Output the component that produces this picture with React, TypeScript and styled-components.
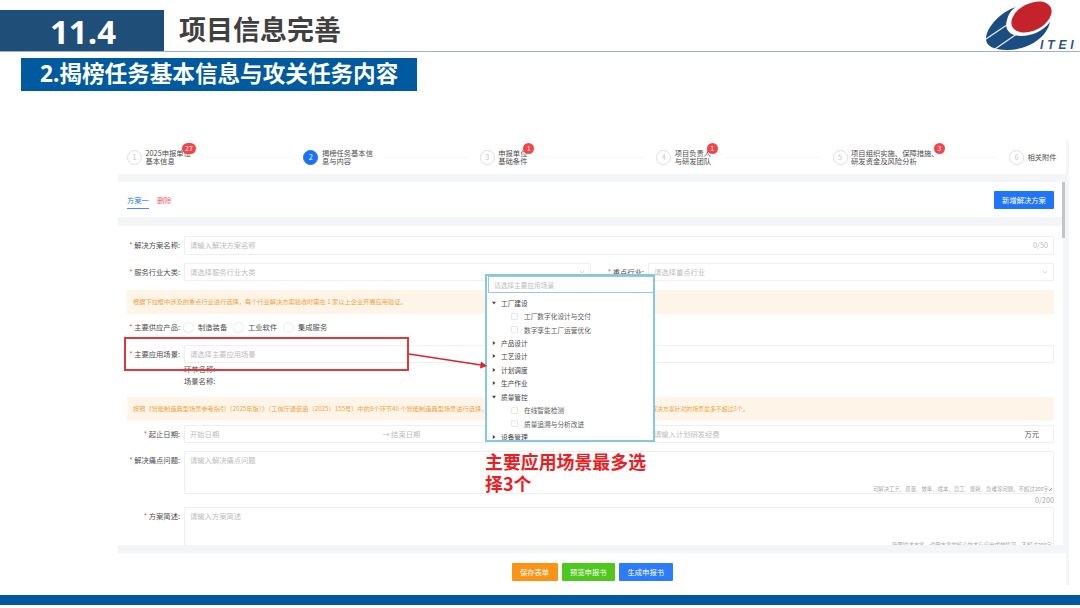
import React from "react";
import styled, { createGlobalStyle, css } from "styled-components";

const GlobalStyle = createGlobalStyle`
  * { box-sizing: border-box; }
  html, body { margin: 0; padding: 0; background: #fff; }
  body { font-family: "Noto Sans CJK SC", sans-serif; overflow: hidden; }
`;

const Slide = styled.main`
  position: relative;
  width: 1080px;
  height: 608px;
  display: flex;
  flex-direction: column;
  align-items: flex-start;
  background: #fff;
  overflow: hidden;
`;

const Header = styled.header`
  width: 100%;
  height: 52px;
  display: flex;
  align-items: flex-end;
  border-bottom: 1px solid #9fb1c6;
  flex: none;
`;

const SectionNumber = styled.div`
  width: 164px;
  height: 41px;
  padding: 0 0 0 2px;
  background: #1f4e79;
  color: #fff;
  font: 700 33px/44px "Open Sans", sans-serif;
  text-align: center;
`;

const Title = styled.h1`
  margin: 0 auto 0 15px;
  height: 43px;
  font-size: 27px;
  font-weight: 700;
  line-height: 42px;
  color: #404040;
`;

const Logo = styled.svg`
  width: 120px;
  height: 51px;
  flex: none;
`;

const Subtitle = styled.h2`
  margin: 6px 0 0 21px;
  width: 396px;
  height: 33px;
  padding-left: 19px;
  background: #005a9f;
  color: #fff;
  font: 700 22.6px/32px "Open Sans", "Noto Sans CJK SC", sans-serif;
  white-space: nowrap;
  flex: none;
`;

const Panel = styled.section`
  margin: 49px 0 0 118px;
  width: 951px;
  height: 445px;
  display: flex;
  flex-direction: column;
  background: #f4f5f6;
  font-size: 7.3px;
  color: #4d4d4d;
  white-space: nowrap;
  flex: none;
`;

const Steps = styled.ol`
  margin: 0 0 8px;
  padding: 0 0 0 9px;
  list-style: none;
  width: 948px;
  height: 34px;
  display: flex;
  background: #fff;
`;

const StepItem = styled.li`
  width: 176.4px;
  flex: none;
  display: flex;
  align-items: center;
  &:last-child { width: auto; }
`;

const StepCircle = styled.span<{ $active?: boolean }>`
  width: 15px;
  height: 15px;
  margin-right: 3.5px;
  border-radius: 50%;
  border: 1px solid ${(p) => (p.$active ? "#1b72f5" : "#dedede")};
  background: ${(p) => (p.$active ? "#1b72f5" : "#fff")};
  color: ${(p) => (p.$active ? "#fff" : "#c8c8c8")};
  line-height: 13px;
  text-align: center;
  flex: none;
`;

const StepLabel = styled.span`
  position: relative;
  line-height: 8px;
`;

const StepBadge = styled.b<{ $left: number }>`
  position: absolute;
  left: ${(p) => p.$left}px;
  top: -6px;
  min-width: 11px;
  height: 11px;
  padding: 0 3.5px;
  border-radius: 6px;
  background: #f5434a;
  color: #fff;
  font-size: 7px;
  font-weight: 400;
  line-height: 11px;
  text-align: center;
`;

const StepLine = styled.i`
  flex: 1;
  height: 1px;
  margin: 0 12px;
  background: #f8f8f8;
`;

const Tabs = styled.nav`
  width: 945px;
  height: 35px;
  margin-bottom: 9px;
  padding: 0 9px;
  display: flex;
  align-items: center;
  gap: 8px;
  background: #fff;
`;

const Tab = styled.span`
  height: 16px;
  margin-top: 2px;
  border-bottom: 1px solid #4a90e8;
  color: #2e7be6;
  line-height: 15px;
`;

const RemoveTab = styled.span`
  height: 16px;
  margin-top: 2px;
  color: #ef5b60;
  line-height: 15px;
  margin-right: auto;
`;

const Button = styled.button<{ $color: string; $width: number }>`
  width: ${(p) => p.$width}px;
  height: 18px;
  padding: 0;
  border: 0;
  border-radius: 1px;
  background: ${(p) => p.$color};
  color: #fff;
  font: 400 7.3px/18px "Noto Sans CJK SC", sans-serif;
`;

const FormArea = styled.div`
  width: 951px;
  height: 319px;
  display: flex;
  margin-bottom: 8px;
`;

const Form = styled.form`
  width: 945px;
  height: 319px;
  padding: 10px 9px 0;
  display: flex;
  flex-direction: column;
  background: #fff;
  overflow: hidden;
`;

const FormRow = styled.div<{ $h: number; $gap: number }>`
  height: ${(p) => p.$h}px;
  margin-bottom: ${(p) => p.$gap}px;
  display: flex;
  flex: none;
`;

const LabelBox = styled.label<{ $w: number }>`
  width: ${(p) => p.$w}px;
  padding-right: 4px;
  text-align: right;
  line-height: 18px;
  flex: none;
  &::before {
    content: "* ";
    color: #ee4b50;
  }
`;

const fieldBorder = css`
  border: 1px solid #efefef;
  border-radius: 1px;
`;

const Field = styled.div<{ $w?: number }>`
  ${fieldBorder}
  ${(p) => (p.$w ? `width: ${p.$w}px; flex: none;` : "flex: 1;")}
  padding: 0 5px;
  display: flex;
  justify-content: space-between;
  color: #bdbdbd;
  font-size: 7.3px;
  line-height: 17px;
`;

const DateTo = styled.span`
  margin-right: auto;
  padding-left: 163px;
`;

const Unit = styled.span`
  padding-right: 9px;
  color: #555;
`;

const Chevron = styled.svg`
  width: 6px;
  height: 16px;
  fill: none;
  stroke: #d8d8d8;
`;

const FieldHint = styled.span`
  align-self: flex-end;
  font-size: 5.4px;
  line-height: 8px;
  margin-right: -4px;
  color: #a8a8a8;
`;

const Grip = styled.svg`
  width: 3px;
  height: 3px;
  stroke: #8a8a8a;
  stroke-width: 0.7;
`;

const Counter = styled.div`
  height: 13px;
  line-height: 13px;
  text-align: right;
  color: #a8a8a8;
  flex: none;
`;

const Alert = styled.div<{ $gap: number }>`
  height: 24px;
  margin-bottom: ${(p) => p.$gap}px;
  padding: 0 6px;
  background: #fff4e8;
  color: #eda546;
  font-size: 6.22px;
  line-height: 24px;
  display: flex;
  flex: none;
`;

const AlertText = styled.span<{ $w: number }>`
  width: ${(p) => p.$w}px;
  overflow: hidden;
`;

const AlertTail = styled.span`
  font-size: 5.9px;
`;

const Radio = styled.span`
  width: 50px;
  display: flex;
  align-items: center;
  gap: 4px;
  &::before {
    content: "";
    width: 9px;
    height: 9px;
    border: 1px solid #ebebeb;
    border-radius: 50%;
  }
`;

const RadioGroup = styled.div`
  display: flex;
  margin-left: -1px;
`;

const SubLabels = styled.div`
  height: 34px;
  padding: 0 0 0 57px;
  line-height: 12px;
  flex: none;
`;

const ScrollThumb = styled.div`
  width: 2.5px;
  height: 56px;
  margin: -44px 0 0 -1px;
  background: #c3c5c6;
`;

const Actions = styled.footer`
  width: 948px;
  height: 32px;
  padding: 10px 0 0 393.5px;
  display: flex;
  gap: 4px;
  background: #fff;
`;

const BottomBar = styled.div`
  width: 100%;
  height: 10px;
  margin-top: 10px;
  background: #005a9f;
  flex: none;
`;

const Highlight = styled.div`
  position: absolute;
  left: 124px;
  top: 337px;
  width: 285px;
  height: 34px;
  border: 2px solid #e0383c;
`;

const Arrow = styled.svg`
  position: absolute;
  left: 408px;
  top: 346px;
  width: 80px;
  height: 28px;
`;

const Dropdown = styled.div`
  position: absolute;
  left: 485px;
  top: 274px;
  width: 170px;
  height: 168px;
  border: 2px solid #86c8e0;
  background: #fff;
  overflow: hidden;
  font-size: 6.7px;
  white-space: nowrap;
`;

const Search = styled.div`
  height: 17px;
  margin-left: 1px;
  padding-left: 5px;
  border: 1px solid #9cc4ee;
  border-right: 0;
  color: #bdbdbd;
  line-height: 17px;
  margin-bottom: 3px;
`;

const TreeNode = styled.div<{ $child?: boolean }>`
  height: 13.45px;
  padding-left: ${(p) => (p.$child ? 24 : 5)}px;
  display: flex;
  align-items: center;
  gap: ${(p) => (p.$child ? 6 : 5)}px;
  color: ${(p) => (p.$child ? "#5c5c5c" : "#444")};
`;

const Caret = styled.svg`
  width: 4px;
  height: 4px;
  fill: #444;
`;

const CheckBox = styled.i`
  width: 7px;
  height: 7px;
  border: 1px solid #e8e8e8;
  border-radius: 1px;
`;

const Note = styled.p`
  position: absolute;
  left: 485px;
  top: 451px;
  margin: 0;
  color: #f01c1f;
  font-size: 17.9px;
  font-weight: 700;
  line-height: 21.5px;
  white-space: nowrap;
`;

type Step = { lines: string[]; badge?: string; at?: number; active?: boolean };

const steps: Step[] = [
  { lines: ["2025申报单位", "基本信息"], badge: "27", at: 36 },
  { lines: ["揭榜任务基本信", "息与内容"], active: true },
  { lines: ["申报单位", "基础条件"], badge: "1", at: 25 },
  { lines: ["项目负责人", "与研发团队"], badge: "1", at: 32 },
  { lines: ["项目组织实施、保障措施、", "研发资金及风险分析"], badge: "3", at: 83 },
  { lines: ["相关附件"] },
];

type Node = { text: string; child?: boolean; open?: boolean };

const tree: Node[] = [
  { text: "工厂建设", open: true },
  { text: "工厂数字化设计与交付", child: true },
  { text: "数字孪生工厂运营优化", child: true },
  { text: "产品设计" },
  { text: "工艺设计" },
  { text: "计划调度" },
  { text: "生产作业" },
  { text: "质量管控", open: true },
  { text: "在线智能检测", child: true },
  { text: "质量追溯与分析改进", child: true },
  { text: "设备管理" },
];

const DownIcon = () => (
  <Chevron viewBox="0 0 6 16">
    <path d="M1 7l2 2 2-2" />
  </Chevron>
);

const ResizeGrip = () => (
  <Grip viewBox="0 0 3 3">
    <path d="M0 3L3 0M1.500 3L3 1.500" />
  </Grip>
);

export default function App() {
  return (
    <>
      <GlobalStyle />
      <Slide>
        <Header>
          <SectionNumber>11.4</SectionNumber>
          <Title>项目信息完善</Title>
          <Logo viewBox="0 0 120 51">
            <path
              fill="#1c4d80"
              d="M56 7C42 11 26 27 26 39C26 46 34 50 47 50C69 50 87 37 90 22C83 31 72 36 61 36C49 36 44 29 47 20C48 15 51 10 56 7Z"
            />
            <path d="M26 39L46 25.500M35 49L56 34.500" stroke="#dfe9f3" strokeWidth="1.400" />
            <ellipse cx="71.500" cy="17" rx="21.500" ry="13.500" transform="rotate(-27 71.500 17)" fill="#c5232c" />
            <text
              x="80"
              y="49.300"
              fill="#2b5684"
              fontFamily="Liberation Sans, sans-serif"
              fontSize="12"
              fontWeight="700"
              fontStyle="italic"
              letterSpacing="3.900"
            >
              ITEI
            </text>
          </Logo>
        </Header>
        <Subtitle>2.揭榜任务基本信息与攻关任务内容</Subtitle>

        <Panel>
          <Steps>
            {steps.map((s, i) => (
              <StepItem key={i}>
                <StepCircle $active={s.active}>{i + 1}</StepCircle>
                <StepLabel>
                  {s.lines[0]}
                  {s.lines[1] && <br />}
                  {s.lines[1]}
                  {s.badge && <StepBadge $left={s.at ?? 0}>{s.badge}</StepBadge>}
                </StepLabel>
                {i < steps.length - 1 && <StepLine />}
              </StepItem>
            ))}
          </Steps>

          <Tabs>
            <Tab>方案一</Tab>
            <RemoveTab>删除</RemoveTab>
            <Button type="button" $color="#1f75f8" $width={60}>新增解决方案</Button>
          </Tabs>

          <FormArea>
            <Form>
              <FormRow $h={19} $gap={8}>
                <LabelBox $w={57}>解决方案名称:</LabelBox>
                <Field>
                  <span>请输入解决方案名称</span>
                  <span>0/50</span>
                </Field>
              </FormRow>
              <FormRow $h={18} $gap={9}>
                <LabelBox $w={57}>服务行业大类:</LabelBox>
                <Field $w={407}>
                  <span>请选择服务行业大类</span>
                  <DownIcon />
                </Field>
                <LabelBox $w={57}>重点行业:</LabelBox>
                <Field>
                  <span>请选择重点行业</span>
                  <DownIcon />
                </Field>
              </FormRow>
              <Alert $gap={4}>
                根据下拉框中涉及的重点行业进行选择，每个行业解决方案验收时需在 1 家以上企业开展应用验证。
              </Alert>
              <FormRow $h={18} $gap={9}>
                <LabelBox $w={57}>主要供应产品:</LabelBox>
                <RadioGroup>
                  <Radio>制造装备</Radio>
                  <Radio>工业软件</Radio>
                  <Radio>集成服务</Radio>
                </RadioGroup>
              </FormRow>
              <FormRow $h={18} $gap={0}>
                <LabelBox $w={57}>主要应用场景:</LabelBox>
                <Field>
                  <span>请选择主要应用场景</span>
                </Field>
              </FormRow>
              <SubLabels>
                环节名称:
                <br />
                场景名称:
              </SubLabels>
              <Alert $gap={4}>
                <AlertText $w={518}>
                  按照《智能制造典型场景参考指引（2025年版）》（工信厅通装函〔2025〕155号）中的8个环节40 个智能制造典型场景进行选择，
                </AlertText>
                <AlertTail>解决方案针对的场景最多不超过3个。</AlertTail>
              </Alert>
              <FormRow $h={18} $gap={8}>
                <LabelBox $w={57}>起止日期:</LabelBox>
                <Field $w={407}>
                  <span>开始日期</span>
                  <DateTo>→ 结束日期</DateTo>
                </Field>
                <LabelBox $w={57}>研发经费:</LabelBox>
                <Field>
                  <span>请输入计划研发经费</span>
                  <Unit>万元</Unit>
                </Field>
              </FormRow>
              <FormRow $h={43} $gap={0}>
                <LabelBox $w={57}>解决痛点问题:</LabelBox>
                <Field>
                  <span>请输入解决痛点问题</span>
                  <FieldHint>
                    可解决工艺、质量、效率、成本、员工、能耗、急难等问题，不超过200字
                    <ResizeGrip />
                  </FieldHint>
                </Field>
              </FormRow>
              <Counter>0/200</Counter>
              <FormRow $h={43} $gap={0}>
                <LabelBox $w={57}>方案简述:</LabelBox>
                <Field>
                  <span>请输入方案简述</span>
                  <FieldHint>简要描述方案，说明方案的核心技术与应用成效情况，不超过200字</FieldHint>
                </Field>
              </FormRow>
            </Form>
            <ScrollThumb />
          </FormArea>

          <Actions>
            <Button type="button" $color="#fb9317" $width={46}>保存表单</Button>
            <Button type="button" $color="#4fc71d" $width={53.5}>预览申报书</Button>
            <Button type="button" $color="#2b7bfa" $width={53.5}>生成申报书</Button>
          </Actions>
        </Panel>

        <BottomBar />

        <Highlight />
        <Dropdown>
          <Search>请选择主要应用场景</Search>
          {tree.map((n) => (
            <TreeNode key={n.text} $child={n.child}>
              {n.child ? (
                <CheckBox />
              ) : (
                <Caret viewBox="0 0 4 4">
                  <path d={n.open ? "M0 .8h4L2 3.600z" : "M.8 0v4L3.400 2z"} />
                </Caret>
              )}
              {n.text}
            </TreeNode>
          ))}
        </Dropdown>
        <Arrow viewBox="0 0 80 28">
          <path d="M1 8L73 19" stroke="#e02226" strokeWidth="1.500" />
          <path d="M79 20L72 22.500L73 15.500Z" fill="#e02226" />
        </Arrow>
        <Note>
          主要应用场景最多选
          <br />
          择3个
        </Note>
      </Slide>
    </>
  );
}
